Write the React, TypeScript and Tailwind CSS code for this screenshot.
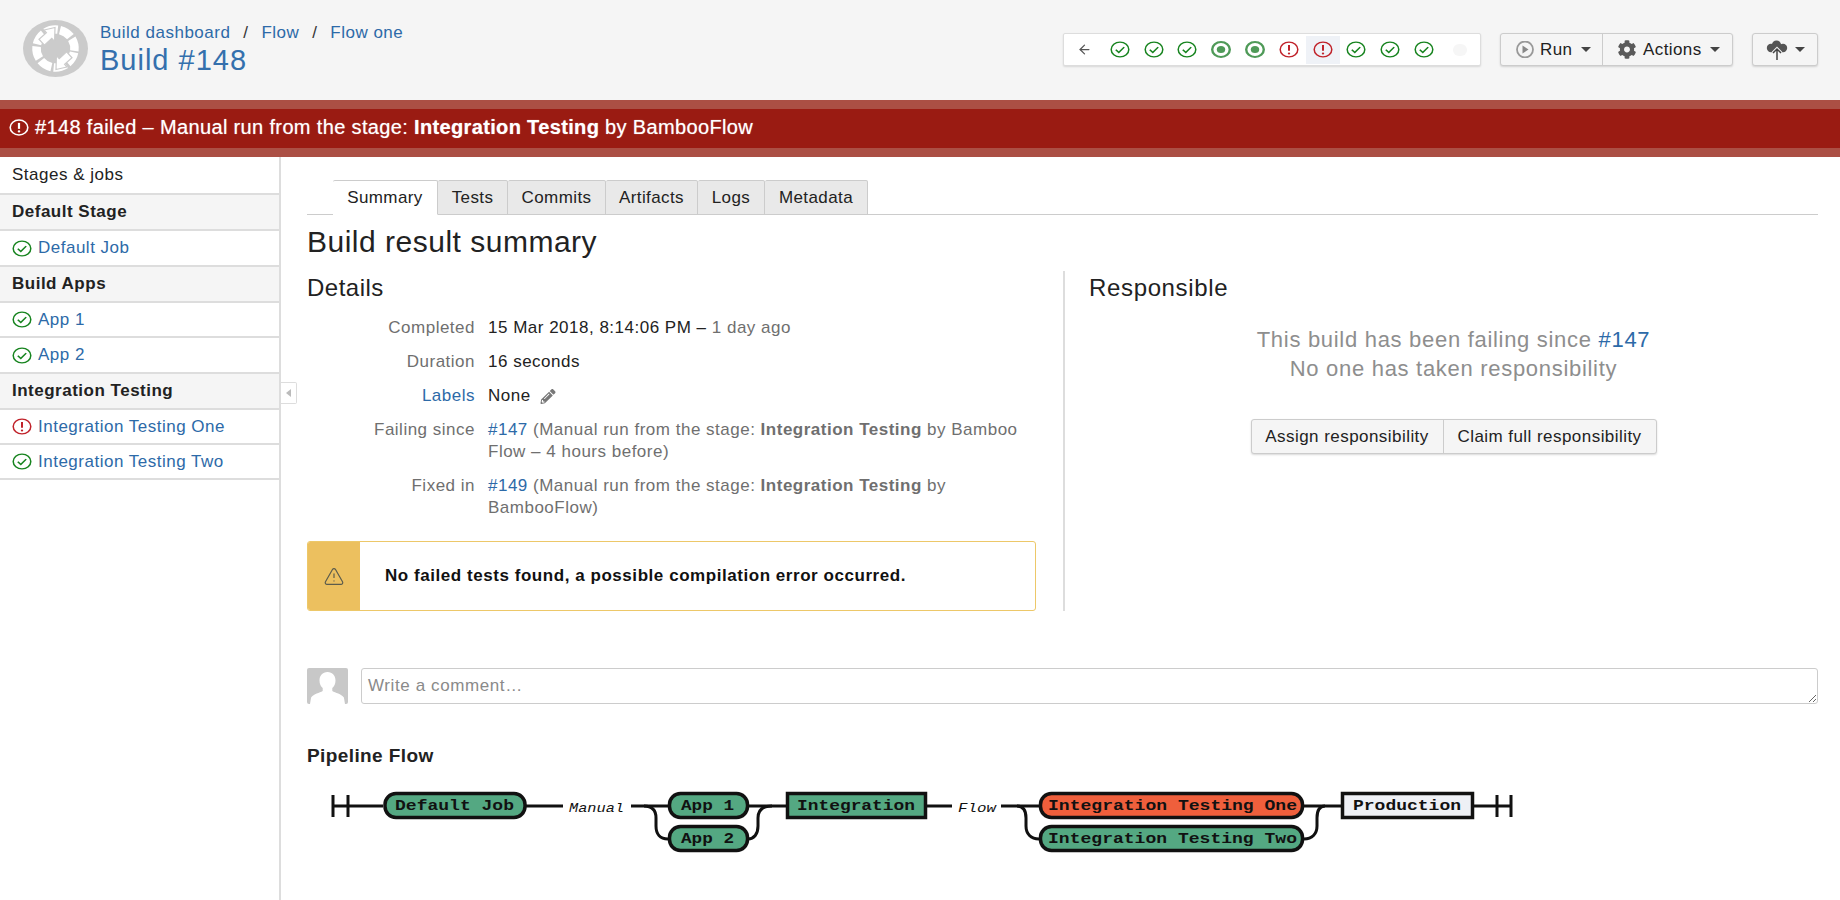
import React from "react";
import { ArrowLeft, TriangleAlert } from "lucide-react";
import { FaCog, FaPencilAlt } from "react-icons/fa";

type Kind = "ok" | "run" | "fail";

function Status({ kind }: { kind: Kind }) {
  const color = kind === "fail" ? "#c0222a" : kind === "run" ? "#4f9a58" : "#17841f";
  return (
    <svg viewBox="0 0 20 20" preserveAspectRatio="none" className="w-[20px] h-[17px] shrink-0" fill="none">
      <circle cx="10" cy="10" r="8.8" stroke={color} strokeWidth={kind === "run" ? 2.4 : 1.5} />
      {kind === "ok" && <path d="M5.8 10.4l3 3 5.4-6.2" stroke={color} strokeWidth="1.7" />}
      {kind === "run" && <circle cx="10" cy="10" r="4.2" fill={color} />}
      {kind === "fail" && (
        <>
          <path d="M10 4.6v7" stroke={color} strokeWidth="2" />
          <circle cx="10" cy="14.6" r="1.2" fill={color} />
        </>
      )}
    </svg>
  );
}

function Logo() {
  const c = 2 * Math.PI * 19;
  return (
    <svg viewBox="0 0 65 57" preserveAspectRatio="none" className="w-[65px] h-[57px] shrink-0">
      <ellipse cx="32.5" cy="28.5" rx="32.5" ry="28.5" fill="#cbcbcb" />
      <circle
        cx="32.5"
        cy="28.5"
        r="19"
        fill="none"
        stroke="#fff"
        strokeWidth="8.500"
        strokeDasharray={`${c / 8 - 2.4} 2.4`}
        transform="rotate(12 32.5 28.500)"
      />
      <path d="M32 7.500 21 10l2.400 2.600-7.400 6.600 5.400 6 7.400-6.800 2.800 3z" fill="#fff" stroke="#cbcbcb" strokeWidth="1.200" />
      <path d="M33 49.500 44 47l-2.400-2.600 7.400-6.600-5.400-6-7.400 6.800-2.800-3z" fill="#fff" stroke="#cbcbcb" strokeWidth="1.200" />
    </svg>
  );
}

function Caret() {
  return <span className="inline-block w-0 h-0 border-x-[5px] border-x-transparent border-t-[5px] border-t-[#444]" />;
}

function Cloud() {
  return (
    <svg viewBox="0 0 22 20" className="w-[22px] h-[20px]">
      <g fill="#555">
        <circle cx="10.500" cy="5" r="4.600" />
        <circle cx="5" cy="8" r="4.200" />
        <circle cx="17" cy="8" r="4.200" />
        <rect x="4" y="7" width="14" height="5" rx="2.400" />
      </g>
      <path d="M11 20V9.500M7 13l4-4 4 4" fill="none" stroke="#f5f5f5" strokeWidth="3.400" />
      <path d="M11 20V9.500M7 13l4-4 4 4" fill="none" stroke="#444" strokeWidth="1.500" />
    </svg>
  );
}

const statuses: Kind[] = ["ok", "ok", "ok", "run", "run", "fail", "fail", "ok", "ok", "ok"];

function Timeline() {
  return (
    <div className="flex items-center w-[418px] h-[33px] bg-white border border-[#ddd] rounded-[2px] shadow-[0_1px_2px_rgba(0,0,0,0.12)] pl-[13px]">
      <ArrowLeft className="w-[15px] h-[15px] shrink-0 text-[#555] mr-[11px]" strokeWidth={2} />
      {statuses.map((k, i) => (
        <div
          key={i}
          className={`w-[33.8px] h-[28px] shrink-0 flex items-center justify-center ${i === 6 ? "bg-[#eff2f7]" : ""}`}
        >
          <Status kind={k} />
        </div>
      ))}
      <div className="flex-1 flex justify-center">
        <span className="w-[14px] h-[12px] rounded-full bg-[#f6f6f6]" />
      </div>
    </div>
  );
}

function Header() {
  return (
    <header className="h-[100px] bg-[#f5f5f5] flex justify-between pl-[23px] pr-[22px]">
      <div className="flex items-start gap-[12px] pt-[20px]">
        <Logo />
        <div className="text-[#2d6aa8]">
          <div className="text-[17px] tracking-[0.5px] leading-[24px] mt-[1px] flex">
            <span>Build dashboard</span>
            <span className="text-[#333] w-[31px] text-center">/</span>
            <span>Flow</span>
            <span className="text-[#333] w-[31px] text-center">/</span>
            <span>Flow one</span>
          </div>
          <h1 className="text-[29px] tracking-[1px] leading-[36px] -mt-[3px] text-[#3470ad]">Build #148</h1>
        </div>
      </div>
      <div className="flex items-start gap-[19px] pt-[33px] text-[17px] tracking-[0.4px] text-[#222]">
        <Timeline />
        <div className="flex h-[33px] rounded-[3px] border border-[#ccc] bg-[#f5f5f5] shadow-[0_1px_2px_rgba(0,0,0,0.15)]">
          <div className="w-[102px] pl-[14px] flex items-center border-r border-[#ccc]">
            <svg viewBox="0 0 20 17" preserveAspectRatio="none" className="w-[20px] h-[17px] mr-[5px]">
              <circle cx="10" cy="8.500" r="8" fill="none" stroke="#999" strokeWidth="1.800" />
              <path d="M7.500 4.500v8l6-4z" fill="#888" />
            </svg>
            <span className="mr-[9px]">Run</span>
            <Caret />
          </div>
          <div className="w-[129px] pl-[14px] flex items-center">
            <FaCog className="w-[20px] h-[19px] text-[#5a5a5a] mr-[6px]" />
            <span className="mr-[8px]">Actions</span>
            <Caret />
          </div>
        </div>
        <div className="w-[66px] h-[33px] rounded-[3px] border border-[#ccc] bg-[#f5f5f5] shadow-[0_1px_2px_rgba(0,0,0,0.15)] flex items-center pl-[13px] gap-[7px]">
          <Cloud />
          <Caret />
        </div>
      </div>
    </header>
  );
}

function Banner() {
  return (
    <div className="h-[57px] pb-[3px] bg-[#9a1b12] border-y-[9px] border-t-[#ab4f44] border-b-[#ab4f44] flex items-center pl-[9px] gap-[6px] text-white text-[20px] tracking-[0.35px] [text-shadow:0_0_1px_rgba(255,255,255,0.6)]">
      <svg viewBox="0 0 20 20" preserveAspectRatio="none" className="w-[20px] h-[17px]" fill="none">
        <circle cx="10" cy="10" r="8.800" stroke="#fff" strokeWidth="1.600" />
        <path d="M10 4.600v7" stroke="#fff" strokeWidth="2.200" />
        <circle cx="10" cy="14.600" r="1.300" fill="#fff" />
      </svg>
      <span>
        #148 failed – Manual run from the stage: <b className="font-bold">Integration Testing</b> by BambooFlow
      </span>
    </div>
  );
}

function StageHead({ children }: { children: React.ReactNode }) {
  return (
    <div className="h-[36px] flex items-center pl-[12px] bg-[#f5f5f5] border-b-2 border-[#ddd] font-bold text-[#222]">
      {children}
    </div>
  );
}

function Job({ kind, label, tall }: { kind: Kind; label: string; tall?: boolean }) {
  return (
    <div className={`${tall ? "h-[36px]" : "h-[35px]"} flex items-center pl-[12px] gap-[6px] border-b-2 border-[#ddd] text-[#2d6aa8]`}>
      <Status kind={kind} />
      <span>{label}</span>
    </div>
  );
}

function Sidebar() {
  return (
    <aside className="relative w-[281px] shrink-0 border-r-2 border-[#ddd] text-[17px] tracking-[0.5px]">
      <div className="h-[38px] flex items-center pl-[12px] border-b-2 border-[#ddd] text-[#222]">Stages &amp; jobs</div>
      <StageHead>Default Stage</StageHead>
      <Job kind="ok" label="Default Job" tall />
      <StageHead>Build Apps</StageHead>
      <Job kind="ok" label="App 1" />
      <Job kind="ok" label="App 2" tall />
      <StageHead>Integration Testing</StageHead>
      <Job kind="fail" label="Integration Testing One" />
      <Job kind="ok" label="Integration Testing Two" />
      <div className="absolute left-[281px] top-[225px] w-[16px] h-[22px] bg-white border border-l-0 border-[#ddd] rounded-r-[2px] flex items-center justify-center">
        <span className="w-0 h-0 border-y-[4px] border-y-transparent border-r-[5px] border-r-[#bbb]" />
      </div>
    </aside>
  );
}

const tabs = [
  ["Summary", "w-[105px]"],
  ["Tests", "w-[70px]"],
  ["Commits", "w-[98px]"],
  ["Artifacts", "w-[92px]"],
  ["Logs", "w-[67px]"],
  ["Metadata", "w-[103px]"],
];

function Tabs() {
  return (
    <div className="flex h-[35px] pl-[26px] border-b border-[#ccc] text-[17px] tracking-[0.4px] text-[#222]">
      {tabs.map(([t, w], i) => (
        <div
          key={t}
          className={`${w} h-[35px] flex items-center justify-center border border-[#ccc] border-l-0 rounded-t-[2px] ${
            i === 0 ? "bg-white border-l border-b-white" : "bg-[#e9e9e9]"
          }`}
        >
          {t}
        </div>
      ))}
    </div>
  );
}

function Row({ label, link, children }: { label: string; link?: boolean; children: React.ReactNode }) {
  return (
    <div className="grid grid-cols-[168px_1fr] gap-x-[13px] leading-[22px]">
      <div className={`text-right ${link ? "text-[#2d6aa8]" : "text-[#6f6f6f]"}`}>{label}</div>
      <div>{children}</div>
    </div>
  );
}

function Details() {
  const A = ({ c }: { c: string }) => <span className="text-[#2d6aa8]">{c}</span>;
  return (
    <section className="w-[756px] shrink-0 pr-[27px]">
      <h3 className="text-[24px] tracking-[0.5px] leading-[34px] text-[#222]">Details</h3>
      <div className="mt-[12px] flex flex-col gap-[12px] text-[17px] tracking-[0.5px] text-[#222]">
        <Row label="Completed">
          15 Mar 2018, 8:14:06 PM – <span className="text-[#6f6f6f]">1 day ago</span>
        </Row>
        <Row label="Duration">16 seconds</Row>
        <Row label="Labels" link>
          <span className="flex items-center gap-[8px]">
            None <FaPencilAlt className="w-[18px] h-[15px] text-[#777]" />
          </span>
        </Row>
        <Row label="Failing since">
          <span className="text-[#6f6f6f]">
            <A c="#147" /> (Manual run from the stage: <b>Integration Testing</b> by Bamboo Flow – 4 hours before)
          </span>
        </Row>
        <Row label="Fixed in">
          <span className="text-[#6f6f6f]">
            <A c="#149" /> (Manual run from the stage: <b>Integration Testing</b> by BambooFlow)
          </span>
        </Row>
      </div>
      <div className="mt-[22px] h-[70px] flex border border-[#edc869] rounded-[3px] overflow-hidden">
        <div className="w-[52px] bg-[#ecc05f] flex items-center justify-center">
          <TriangleAlert className="w-[22px] h-[21px] text-[#5c5c4c]" strokeWidth={1.4} />
        </div>
        <div className="flex items-center pl-[25px] font-bold text-[17px] tracking-[0.55px] text-[#111]">
          No failed tests found, a possible compilation error occurred.
        </div>
      </div>
    </section>
  );
}

function Responsible() {
  return (
    <section className="flex-1 border-l-2 border-[#ddd] pl-[24px]">
      <h3 className="text-[24px] tracking-[0.65px] leading-[34px] text-[#222]">Responsible</h3>
      <div className="mt-[20px] text-center text-[22px] tracking-[0.7px] leading-[29px] text-[#8e8e8e]">
        <div>
          This build has been failing since <span className="text-[#2d6aa8]">#147</span>
        </div>
        <div>No one has taken responsibility</div>
      </div>
      <div className="mt-[36px] flex justify-center text-[17px] tracking-[0.45px] text-[#222]">
        <div className="flex h-[35px] rounded-[3px] border border-[#ccc] bg-[#f5f5f5] shadow-[0_1px_2px_rgba(0,0,0,0.15)]">
          <div className="w-[192px] flex items-center justify-center border-r border-[#ccc]">Assign responsibility</div>
          <div className="w-[212px] flex items-center justify-center">Claim full responsibility</div>
        </div>
      </div>
    </section>
  );
}

function Comment() {
  return (
    <div className="mt-[57px] flex gap-[13px]">
      <svg viewBox="0 0 41 36" className="w-[41px] h-[36px] shrink-0">
        <rect width="41" height="36" rx="2" fill="#c8c8c8" />
        <path d="M20.500 4c5 0 8 3.600 8 8.400 0 3.400-1.400 6-3.200 7.600v3c3 2 9 2.800 11.600 6.400L38 36H3l1.100-6.600C6.700 25.800 12.700 25 15.700 23v-3C13.900 18.400 12.500 15.800 12.500 12.400 12.500 7.600 15.500 4 20.500 4z" fill="#fff" />
      </svg>
      <textarea
        placeholder="Write a comment…"
        className="flex-1 h-[36px] min-w-0 border border-[#ccc] rounded-[3px] px-[6px] py-[5px] text-[17px] tracking-[0.6px] leading-[24px] placeholder:text-[#8a8a8a] outline-none"
      />
    </div>
  );
}

const GREEN = "#54a882";
const NODE = "font-['Liberation_Mono',monospace] font-bold";
const EDGE = "font-['Liberation_Mono',monospace] italic";

function Node({ x, w, y, label, tx, tw, fill, rect }: { x: number; w: number; y: number; label: string; tx: number; tw: number; fill: string; rect?: boolean }) {
  return (
    <g>
      <rect x={x} y={y} width={w} height={24} rx={rect ? 0 : 11} fill={fill} stroke="#111" strokeWidth="3.500" />
      <text x={tx} y={y + 16} textLength={tw} lengthAdjust="spacingAndGlyphs" fontSize="15.500" fill="#111" className={NODE}>
        {label}
      </text>
    </g>
  );
}

function Diagram() {
  return (
    <svg viewBox="307 775 1511 90" className="block w-[1511px] h-[90px] mt-[8px]">
      <g fill="none" stroke="#111" strokeWidth="3">
        <path d="M333 794v22M348 794v22M1497 794v22M1511 794v22" />
        <path d="M333 805h50M526 805h37M631 805h37M748 805h38M927 805h25M1001 805h38M1304 805h37M1474 805h37" />
        <path d="M644 805c8 0 12 4 12 12v8c0 8 4 13 12 13M772 805c-9 0-14 4-14 12v8c0 8-4 13-10 13" />
        <path d="M1017 805c6 0 9 4 9 12v8c0 8 5 13 13 13M1325 805c-5 0-8 4-8 12v8c0 8-5 13-13 13" />
      </g>
      <Node x={669.5} w={78} y={792.5} label="App 1" tx={681} tw={53} fill={GREEN} />
      <Node x={669.5} w={78} y={825.5} label="App 2" tx={681} tw={53} fill={GREEN} />
      <Node x={385} w={140} y={792.5} label="Default Job" tx={395} tw={119} fill={GREEN} />
      <Node x={787.5} w={138} y={792.5} label="Integration" tx={797} tw={118} fill={GREEN} rect />
      <Node x={1040.5} w={262} y={792.5} label="Integration Testing One" tx={1048} tw={249} fill="#ef5f3c" />
      <Node x={1040.5} w={262} y={825.5} label="Integration Testing Two" tx={1048} tw={249} fill={GREEN} />
      <Node x={1342.5} w={130} y={792.5} label="Production" tx={1353} tw={108} fill="#eef0f5" rect />
      <text x={569} y={811} textLength={55} lengthAdjust="spacingAndGlyphs" fontSize="13.500" fill="#111" className={EDGE}>Manual</text>
      <text x={958} y={811} textLength={38} lengthAdjust="spacingAndGlyphs" fontSize="13.500" fill="#111" className={EDGE}>Flow</text>
    </svg>
  );
}

export default function App() {
  return (
    <div className="w-[1840px] h-[900px] overflow-hidden bg-white font-['Liberation_Sans',Arial,sans-serif]">
      <Header />
      <Banner />
      <div className="flex h-[743px]">
        <Sidebar />
        <main className="flex-1 min-w-0 pr-[22px] pt-[23px] pl-[26px]">
          <Tabs />
          <h2 className="mt-[9px] text-[30px] tracking-[0.5px] leading-[36px] text-[#222]">Build result summary</h2>
          <div className="mt-[11px] flex h-[340px]">
            <Details />
            <Responsible />
          </div>
          <Comment />
          <h4 className="mt-[40px] text-[19px] tracking-[0.4px] leading-[24px] font-bold text-[#222]">Pipeline Flow</h4>
          <Diagram />
        </main>
      </div>
    </div>
  );
}
